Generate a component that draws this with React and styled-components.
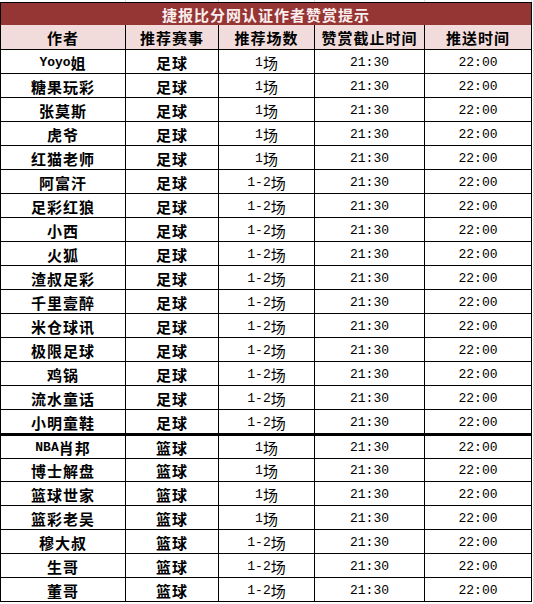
import React from "react";
import styled, { createGlobalStyle } from "styled-components";

const GlobalStyle = createGlobalStyle`
  html, body {
    margin: 0;
    padding: 0;
    background: #ffffff;
  }
  body {
    font-family: "Noto Sans CJK SC", "Noto Sans", sans-serif;
  }
`;

const Frame = styled.div`
  width: 534px;
  height: 604px;
  box-sizing: border-box;
  border-right: 1px solid #dadcdd;
  overflow: hidden;
`;

const GridStrip = styled.div`
  display: grid;
  grid-template-columns: 125px 93px 96px 110px 107px;
  height: 2px;
  padding-left: 1px;
`;

const GridLine = styled.div`
  border-right: 1px solid #dadcdd;
`;

const Sheet = styled.div`
  width: 532px;
  box-sizing: border-box;
  border-left: 1px solid #000;
  border-top: 1px solid #000;
`;

const Title = styled.div`
  height: 22px;
  border-right: 1px solid #000;
  background: #963634;
  color: #fbeeee;
  font-size: 15px;
  font-weight: 700;
  letter-spacing: 1px;
  display: flex;
  align-items: center;
  justify-content: center;
`;

const Row = styled.div`
  display: grid;
  grid-template-columns: 125px 93px 96px 110px 107px;
  height: ${(p) => p.$height}px;
  background: ${(p) => (p.$head ? "#f2dcdb" : "#ffffff")};
`;

const Cell = styled.div`
  box-sizing: border-box;
  border-right: 1px solid #000;
  border-bottom: ${(p) => p.$bottom}px solid #000;
  padding-top: ${(p) => (p.$head ? 0 : 2)}px;
  display: flex;
  align-items: center;
  justify-content: center;
  font-size: 15px;
  font-weight: ${(p) => (p.$bold ? 700 : 400)};
  letter-spacing: ${(p) => (p.$bold ? "1px" : "0")};
  color: #000;
  white-space: nowrap;
`;

const Latin = styled.span`
  font-family: "Liberation Mono", "DejaVu Sans Mono", monospace;
  font-size: 13px;
  letter-spacing: 0;
`;

const headers = ["作者", "推荐赛事", "推荐场数", "赞赏截止时间", "推送时间"];

const football = [
  ["Yoyo姐", "1场"],
  ["糖果玩彩", "1场"],
  ["张莫斯", "1场"],
  ["虎爷", "1场"],
  ["红猫老师", "1场"],
  ["阿富汗", "1-2场"],
  ["足彩红狼", "1-2场"],
  ["小西", "1-2场"],
  ["火狐", "1-2场"],
  ["渣叔足彩", "1-2场"],
  ["千里壹醉", "1-2场"],
  ["米仓球讯", "1-2场"],
  ["极限足球", "1-2场"],
  ["鸡锅", "1-2场"],
  ["流水童话", "1-2场"],
  ["小明童鞋", "1-2场"],
];

const basketball = [
  ["NBA肖邦", "1场"],
  ["博士解盘", "1场"],
  ["篮球世家", "1场"],
  ["篮彩老吴", "1场"],
  ["穆大叔", "1-2场"],
  ["生哥", "1-2场"],
  ["董哥", "1-2场"],
];

const rows = [
  ...football.map(([author, count]) => ({ author, sport: "足球", count })),
  ...basketball.map(([author, count]) => ({ author, sport: "篮球", count })),
];

// split text into ascii / cjk runs so ascii uses the narrow mono face
const Mixed = ({ text }) => {
  const parts = text.match(/[\x00-\x7f]+|[^\x00-\x7f]+/g) || [];
  return parts.map((part, i) =>
    /^[\x00-\x7f]+$/.test(part) ? <Latin key={i}>{part}</Latin> : <span key={i}>{part}</span>
  );
};

const App = () => {
  const splitAt = football.length - 1;

  return (
    <>
      <GlobalStyle />
      <Frame>
        <GridStrip>
          {headers.map((h) => (
            <GridLine key={h} />
          ))}
        </GridStrip>
        <Sheet>
          <Title>捷报比分网认证作者赞赏提示</Title>
          <Row $head $height={25}>
            {headers.map((h) => (
              <Cell key={h} $head $bold $bottom={1}>
                {h}
              </Cell>
            ))}
          </Row>
          {rows.map((r, i) => {
            const thick = i === splitAt;
            const height = thick ? 25 : i === splitAt + 1 ? 23 : 24;
            const bottom = thick ? 3 : 1;
            return (
              <Row key={r.author} $height={height}>
                <Cell $bold $bottom={bottom}>
                  <Mixed text={r.author} />
                </Cell>
                <Cell $bold $bottom={bottom}>
                  {r.sport}
                </Cell>
                <Cell $bottom={bottom}>
                  <Mixed text={r.count} />
                </Cell>
                <Cell $bottom={bottom}>
                  <Latin>21:30</Latin>
                </Cell>
                <Cell $bottom={bottom}>
                  <Latin>22:00</Latin>
                </Cell>
              </Row>
            );
          })}
        </Sheet>
      </Frame>
    </>
  );
};

export default App;
